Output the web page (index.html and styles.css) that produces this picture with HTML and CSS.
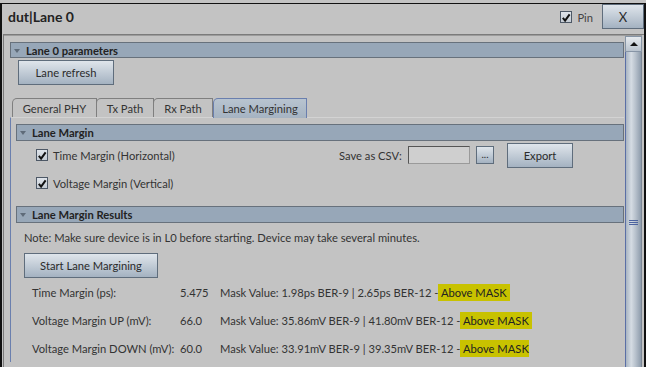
FILE: index.html
```html
<!DOCTYPE html>
<html>
<head>
    <title>dut|Lane 0</title>
    <link rel="stylesheet" href="styles.css">
</head>
<body>
<div class="window">
    <div class="titlebar">
        <div class="title">dut|Lane 0</div>
        <label class="pin"><span class="check"><svg width="11" height="11" viewBox="0 0 11 11"><path d="M2 6 L4.5 9 L9.5 2" fill="none" stroke="#111" stroke-width="2.2"/></svg></span>Pin</label>
        <div class="btn close-btn">X</div>
    </div>
    <div class="scrollpane">
        <div class="viewport">
            <div class="section-bar"><span class="arrow"></span>Lane 0 parameters</div>
            <div class="btn refresh-btn">Lane refresh</div>

            <div class="tabpane">
                <div class="tabs">
                    <div class="tab tab-phy">General PHY</div>
                    <div class="tab tab-tx">Tx Path</div>
                    <div class="tab tab-rx">Rx Path</div>
                    <div class="tab tab-lm selected">Lane Margining</div>
                </div>
                <div class="tab-panel">
                    <div class="section-bar"><span class="arrow"></span>Lane Margin</div>
                    <div class="opt-row">
                        <label class="opt"><span class="check"><svg width="11" height="11" viewBox="0 0 11 11"><path d="M2 6 L4.5 9 L9.5 2" fill="none" stroke="#111" stroke-width="2.2"/></svg></span>Time Margin (Horizontal)</label>
                        <span class="csv-label">Save as CSV:</span>
                        <span class="csv-input"></span>
                        <span class="btn dots-btn">...</span>
                        <span class="btn export-btn">Export</span>
                    </div>
                    <div class="opt-row">
                        <label class="opt"><span class="check"><svg width="11" height="11" viewBox="0 0 11 11"><path d="M2 6 L4.5 9 L9.5 2" fill="none" stroke="#111" stroke-width="2.2"/></svg></span>Voltage Margin (Vertical)</label>
                    </div>

                    <div class="section-bar results-bar"><span class="arrow"></span>Lane Margin Results</div>
                    <div class="results">
                        <div class="note">Note: Make sure device is in L0 before starting. Device may take several minutes.</div>
                        <div class="btn start-btn">Start Lane Margining</div>
                        <div class="result-row">
                            <span class="r-label">Time Margin (ps):</span>
                            <span class="r-value">5.475</span>
                            <span class="r-mask">Mask Value: 1.98ps BER-9 | 2.65ps BER-12 -<span class="hl">&nbsp;Above MASK&nbsp;</span></span>
                        </div>
                        <div class="result-row">
                            <span class="r-label">Voltage Margin UP (mV):</span>
                            <span class="r-value">66.0</span>
                            <span class="r-mask">Mask Value: 35.86mV BER-9 | 41.80mV BER-12 -<span class="hl">&nbsp;Above MASK&nbsp;</span></span>
                        </div>
                        <div class="result-row">
                            <span class="r-label">Voltage Margin DOWN (mV):</span>
                            <span class="r-value">60.0</span>
                            <span class="r-mask">Mask Value: 33.91mV BER-9 | 39.35mV BER-12 -<span class="hl">&nbsp;Above MASK</span></span>
                        </div>
                    </div>
                </div>
            </div>
        </div>
        <div class="scrollbar">
            <div class="sb-up"><span class="up-arrow"></span></div>
            <div class="sb-thumb"><span class="grip"></span></div>
        </div>
    </div>
</div>
</body>
</html>
```

FILE: styles.css
```css
* {
    box-sizing: border-box;
}
body {
    margin: 0;
    width: 646px;
    height: 367px;
    overflow: hidden;
    background-color: #c3c3c3;
    font-family: Lato, "Open Sans", sans-serif;
    font-size: 11.2px;
    color: #333;
}
.window {
    margin-top: 3px;
    height: 364px;
    border-top: 1px solid #111;
    border-left: 2px solid #111;
    border-right: 2px solid #111;
    display: flex;
    flex-direction: column;
}

/* title bar */
.titlebar {
    height: 30px;
    display: flex;
    align-items: flex-start;
    padding-left: 6px;
}
.title {
    font-size: 14px;
    font-weight: bold;
    line-height: 25px;
    color: #222;
    flex: 1;
}
.pin {
    display: flex;
    align-items: center;
    height: 26px;
    margin-right: 9px;
    color: #444;
}
.check {
    width: 12px;
    height: 12px;
    border: 1px solid #4d5866;
    background: linear-gradient(#dfe4ea, #c5ccd4);
    display: inline-flex;
    align-items: center;
    justify-content: center;
    margin-right: 5px;
}
.close-btn {
    width: 42px;
    height: 25px;
    font-size: 13px;
}

/* buttons */
.btn {
    display: flex;
    align-items: center;
    justify-content: center;
    border: 1px solid #5f6d7c;
    background: linear-gradient(#dfe5eb, #a4b2c1);
    color: #2b2b2b;
}

/* scroll pane */
.scrollpane {
    flex: 1;
    display: flex;
    margin-left: 1px;
    border-top: 1px solid #7b7b7b;
    border-left: 1px solid #7b7b7b;
    overflow: hidden;
}
.viewport {
    width: 621px;
    border-top: 1px solid #9c9c9c;
    padding: 6px 1px 0 6px;
    overflow: hidden;
}
.scrollbar {
    width: 17px;
    margin-right: 1px;
    border-top: 1px solid #9c9c9c;
    display: flex;
    flex-direction: column;
}
.sb-up {
    height: 16px;
    border: 1px solid #8795a6;
    background: linear-gradient(#e6eaee, #b9c3ce);
    display: flex;
    align-items: center;
    justify-content: center;
}
.up-arrow {
    width: 0;
    height: 0;
    border-left: 4px solid transparent;
    border-right: 4px solid transparent;
    border-bottom: 4px solid #111;
}
.sb-thumb {
    flex: 1;
    border-left: 1px solid #5a6fa6;
    border-right: 1px solid #7c8796;
    background: linear-gradient(to right, #a8b4c2, #d5dce3 35%, #b6c0cb 65%, #8e9cac);
    display: flex;
    align-items: center;
    justify-content: center;
}
.grip {
    width: 9px;
    height: 5px;
    margin-top: 26px;
    border-top: 1px solid #4d64a0;
    border-bottom: 1px solid #4d64a0;
    background: linear-gradient(transparent 1px, #4d64a0 1px, #4d64a0 2px, transparent 2px);
}

/* collapsible section headers */
.section-bar {
    height: 16px;
    display: flex;
    align-items: center;
    border: 1px solid #67717c;
    background-color: #97a7b8;
    font-weight: bold;
    color: #222;
    white-space: nowrap;
}
.arrow {
    width: 0;
    height: 0;
    margin: 1px 6px 0 3px;
    border-left: 3px solid transparent;
    border-right: 3px solid transparent;
    border-top: 4px solid #5e6b79;
}
.refresh-btn {
    width: 96px;
    height: 25px;
    margin: 2px 0 0 8px;
}

/* tabs */
.tabpane {
    margin-top: 13px;
}
.tabs {
    display: flex;
    padding-left: 2px;
    height: 19px;
}
.tab {
    border: 1px solid #7f7f7f;
    border-bottom: none;
    border-top-left-radius: 5px;
    display: flex;
    align-items: center;
    justify-content: center;
    color: #333;
    margin-right: -1px;
}
.tab-phy { width: 85px; }
.tab-tx { width: 58px; }
.tab-rx { width: 60px; }
.tab-lm { width: 94px; margin-left: 1px; }
.tab.selected {
    border-color: #6a7fae;
    background: linear-gradient(#b8c4d0, #a5b3c2);
    height: 20px;
}
.tab-panel {
    border-top: 1px solid #d3d3d3;
    border-left: 1px solid #6a7fae;
    padding: 6px 0 0 5px;
}
.tab-panel .section-bar {
    height: 17px;
}
.opt-row {
    height: 28px;
    display: flex;
    align-items: center;
    padding-left: 20px;
}
.opt-row:first-of-type {
    margin-top: 2px;
}
.opt {
    width: 303px;
    display: flex;
    align-items: center;
}
.csv-label {
    width: 69px;
}
.csv-input {
    width: 62px;
    height: 18px;
    border: 1px solid #9a9a9a;
    border-top-color: #555;
    border-left-color: #555;
    background-color: #cfcfcf;
}
.dots-btn {
    width: 18px;
    height: 18px;
    margin-left: 6px;
    font-size: 10px;
    padding-bottom: 3px;
}
.export-btn {
    width: 66px;
    height: 25px;
    margin-left: 13px;
}
.results-bar {
    margin-top: 9px;
}
.results {
    padding-left: 8px;
}
.note {
    margin-top: 7px;
    line-height: 16px;
    white-space: nowrap;
}
.start-btn {
    width: 134px;
    height: 25px;
    margin-top: 7px;
}
.result-row {
    height: 28px;
    display: flex;
    align-items: center;
    padding-left: 8px;
    white-space: nowrap;
}
.result-row:first-of-type {
    margin-top: 1px;
}
.r-label {
    width: 148px;
}
.r-value {
    width: 40px;
}
.hl {
    background-color: #c8c200;
    color: #222;
    padding: 2px 0;
}
```
